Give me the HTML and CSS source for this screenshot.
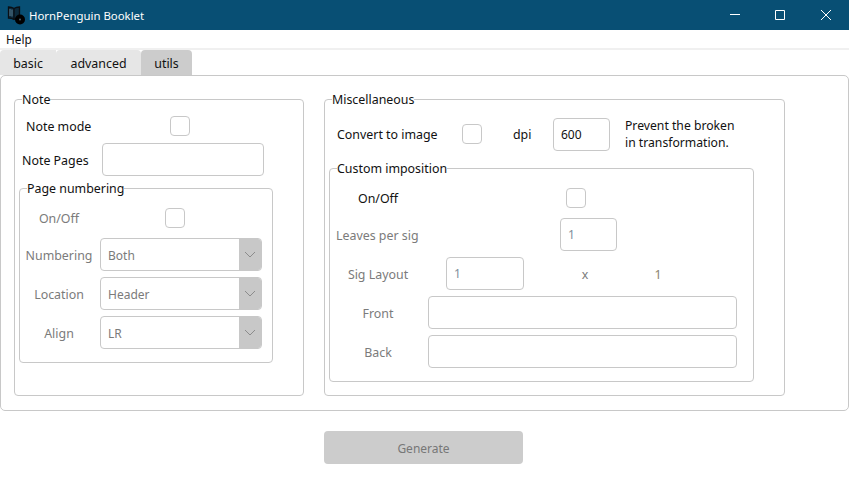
FILE: index.html
```html
<!DOCTYPE html>
<html lang="en">
<head>
    <meta charset="UTF-8">
    <meta name="viewport" content="width=device-width, initial-scale=1.0">
    <title>HornPenguin Booklet</title>
    <link rel="stylesheet" href="styles.css">
</head>
<body>
    <header class="titlebar">
        <svg class="app-icon" width="20" height="20" viewBox="0 0 20 20">
            <path d="M8 3.5C6.5 2.5 4.5 2 2.5 2v11c2 0 4 .5 5.500 1.500 1.500-1 3.500-1.500 5.500-1.500V2c-2 0-4 .5-5.500 1.500zM8 3.500v11" fill="#0b2a3c" stroke="#0a0f14" stroke-width="1.300"/>
            <path d="M4 4v7M6 4.500v7" stroke="#5d7f92" stroke-width="1"/>
            <circle cx="14" cy="14.500" r="5" fill="#000"/>
            <circle cx="14" cy="14.500" r="1" fill="#46606f"/>
        </svg>
        <span class="app-title">HornPenguin Booklet</span>
        <div class="window-buttons">
            <div class="window-btn">
                <svg width="10" height="10" viewBox="0 0 10 10"><path d="M0 4.500h10" stroke="#fff"/></svg>
            </div>
            <div class="window-btn">
                <svg width="10" height="10" viewBox="0 0 10 10"><path d="M.5.500h9v9h-9z" fill="none" stroke="#fff"/></svg>
            </div>
            <div class="window-btn">
                <svg width="10" height="10" viewBox="0 0 10 10"><path d="M0 0l10 10M10 0L0 10" stroke="#fff"/></svg>
            </div>
        </div>
    </header>

    <nav class="menubar">Help</nav>

    <div class="tabs">
        <div class="tab tab-basic">basic</div>
        <div class="tab tab-advanced">advanced</div>
        <div class="tab tab-utils">utils</div>
    </div>

    <main class="pane">
        <fieldset class="group group-note">
            <legend>Note</legend>
            <div class="row row-notemode">
                <span class="label label-notemode">Note mode</span>
                <span class="check"></span>
            </div>
            <div class="row row-notepages">
                <span class="label label-notepages">Note Pages</span>
                <input class="field field-notepages" type="text">
            </div>

            <fieldset class="group group-numbering">
                <legend>Page numbering</legend>
                <div class="row row-numbering-on off">
                    <span class="label label-col">On/Off</span>
                    <span class="check check-numbering"></span>
                </div>
                <div class="row row-combo off">
                    <span class="label label-col">Numbering</span>
                    <div class="combo"><span class="combo-text">Both</span><span class="combo-arrow"><svg width="12" height="7" viewBox="0 0 12 7"><path d="M1 1l5 5 5-5" fill="none" stroke="#8c8c8c"/></svg></span></div>
                </div>
                <div class="row row-combo off">
                    <span class="label label-col">Location</span>
                    <div class="combo"><span class="combo-text">Header</span><span class="combo-arrow"><svg width="12" height="7" viewBox="0 0 12 7"><path d="M1 1l5 5 5-5" fill="none" stroke="#8c8c8c"/></svg></span></div>
                </div>
                <div class="row row-combo off">
                    <span class="label label-col">Align</span>
                    <div class="combo"><span class="combo-text">LR</span><span class="combo-arrow"><svg width="12" height="7" viewBox="0 0 12 7"><path d="M1 1l5 5 5-5" fill="none" stroke="#8c8c8c"/></svg></span></div>
                </div>
            </fieldset>
        </fieldset>

        <fieldset class="group group-misc">
            <legend>Miscellaneous</legend>
            <div class="row row-convert">
                <span class="label label-convert">Convert to image</span>
                <span class="check"></span>
                <span class="label label-dpi">dpi</span>
                <input class="field field-small" type="text" value="600">
                <span class="hint">Prevent the broken<br>in transformation.</span>
            </div>

            <fieldset class="group group-custom">
                <legend>Custom imposition</legend>
                <div class="row row-custom-on">
                    <span class="label label-custom-on">On/Off</span>
                    <span class="check"></span>
                </div>
                <div class="row row-leaves off">
                    <span class="label label-leaves">Leaves per sig</span>
                    <input class="field field-small" type="text" value="1" disabled>
                </div>
                <div class="row row-sig off">
                    <span class="label label-custom">Sig Layout</span>
                    <input class="field field-sig" type="text" value="1" disabled>
                    <span class="sig-x">x</span>
                    <span class="sig-value">1</span>
                </div>
                <div class="row row-sig off">
                    <span class="label label-custom">Front</span>
                    <input class="field field-wide" type="text" disabled>
                </div>
                <div class="row row-sig off">
                    <span class="label label-custom">Back</span>
                    <input class="field field-wide" type="text" disabled>
                </div>
            </fieldset>
        </fieldset>
    </main>

    <div class="actions">
        <button class="generate" disabled>Generate</button>
    </div>
</body>
</html>
```

FILE: styles.css
```css
* {
    box-sizing: border-box;
}
body {
    margin: 0;
    background-color: #fff;
    color: #111;
    font-family: "Noto Sans", sans-serif;
    font-size: 12.4px;
    overflow: hidden;
}
.titlebar {
    display: flex;
    align-items: center;
    height: 30px;
    padding-left: 6px;
    background-color: #084f74;
    color: #fff;
}
.app-icon {
    margin-right: 3px;
}
.app-title {
    font-size: 11.4px;
}
.window-buttons {
    display: flex;
    margin-left: auto;
}
.window-btn {
    display: flex;
    align-items: center;
    justify-content: center;
    width: 46px;
    height: 30px;
}
.window-btn:first-child {
    width: 44px;
}
.menubar {
    height: 20px;
    padding: 0 6px;
    border-bottom: 2px solid #f0f0f0;
    font-size: 11.8px;
    line-height: 19px;
}
.tabs {
    display: flex;
    height: 25px;
}
.tab {
    display: flex;
    align-items: center;
    justify-content: center;
    padding-top: 2px;
    border-radius: 4px 4px 0 0;
    background-color: #e6e6e6;
}
.tab-basic {
    width: 56px;
    margin-right: 2px;
    border-top-right-radius: 0;
}
.tab-advanced {
    width: 85px;
    margin-left: -2px;
}
.tab-utils {
    width: 51px;
    background-color: #ccc;
}
.pane {
    display: flex;
    align-items: stretch;
    gap: 20px;
    height: 336px;
    padding: 15px 14px 0;
    border: 1px solid #c8c8c8;
    border-radius: 5px;
}
.group {
    min-width: 0;
    margin: 0;
    padding: 0;
    border: 1px solid #c8c8c8;
    border-radius: 4px;
}
.group legend {
    height: 16px;
    margin-left: 7px;
    padding: 0;
    line-height: 18px;
}
.group-note {
    width: 290px;
    height: 305px;
    margin-left: -1px;
    flex: none;
}
.group-misc {
    width: 461px;
    height: 305px;
    flex: none;
}
.row {
    display: flex;
    align-items: center;
}
.off {
    color: #7b7b7b;
}
.label {
    flex: none;
}
.check {
    flex: none;
    width: 20px;
    height: 20px;
    border: 1px solid #c8c8c8;
    border-radius: 4px;
    background-color: #fff;
}
.field {
    flex: none;
    height: 33px;
    padding: 0 7px;
    border: 1px solid #c8c8c8;
    border-radius: 4px;
    background-color: #fff;
    color: #111;
    font-family: inherit;
    font-size: 12px;
    outline: none;
}
.field:disabled {
    color: #7f8f9c;
}

/* Note */
.row-notemode {
    margin-top: 9px;
    padding-left: 11px;
}
.label-notemode {
    width: 144px;
}
.row-notepages {
    margin-top: 7px;
    padding-left: 7px;
}
.label-notepages {
    width: 80px;
    padding-top: 2px;
}
.field-notepages {
    width: 162px;
}
.group-numbering {
    width: 254px;
    margin: 4px 0 0 4px;
    padding-bottom: 13px;
}
.row-numbering-on {
    margin-top: 12px;
}
.label-col {
    width: 78px;
    text-align: center;
}
.row-combo .label-col {
    margin-right: 2px;
    padding-top: 2px;
}
.check-numbering {
    margin-left: 67px;
}
.row-combo {
    margin-top: 6px;
}
.row-numbering-on + .row-combo {
    margin-top: 10px;
}
.combo {
    display: flex;
    width: 162px;
    height: 33px;
    border: 1px solid #c8c8c8;
    border-radius: 4px;
    overflow: hidden;
    font-size: 12px;
}
.combo-text {
    flex: 1;
    padding-left: 7px;
    line-height: 33px;
}
.combo-arrow {
    display: flex;
    align-items: center;
    justify-content: center;
    width: 22px;
    background-color: #c8c8c8;
}

/* Miscellaneous */
.group-misc > .row-convert {
    margin-top: 10px;
    padding-left: 12px;
}
.label-convert {
    width: 125px;
}
.label-dpi {
    width: 71px;
    padding-left: 31px;
}
.field-small {
    width: 57px;
}
.hint {
    margin-left: 15px;
    font-size: 12.2px;
    line-height: 17px;
}
.group-custom {
    width: 425px;
    margin: 9px 0 0 4px;
    padding-bottom: 13px;
}
.row-custom-on {
    margin-top: 12px;
    padding-left: 28px;
}
.label-custom-on {
    width: 208px;
}
.row-leaves {
    margin-top: 10px;
    padding-left: 6px;
}
.label-leaves {
    width: 224px;
    padding-top: 2px;
}
.row-sig {
    margin-top: 6px;
}
.label-custom {
    width: 96px;
    padding-top: 2px;
    text-align: center;
}
.field-sig {
    width: 78px;
    margin-left: 20px;
}
.sig-x {
    width: 122px;
    padding-top: 2px;
    text-align: center;
}
.sig-value {
    width: 24px;
    padding-top: 2px;
    text-align: center;
    color: #8c8570;
}
.field-wide {
    width: 309px;
    margin-left: 2px;
}

.actions {
    display: flex;
    justify-content: center;
    padding: 20px 2px 0 0;
}
.generate {
    width: 199px;
    height: 33px;
    padding-top: 2px;
    border: none;
    border-radius: 4px;
    background-color: #ccc;
    color: #777;
    font-family: inherit;
    font-size: 12px;
}
```
